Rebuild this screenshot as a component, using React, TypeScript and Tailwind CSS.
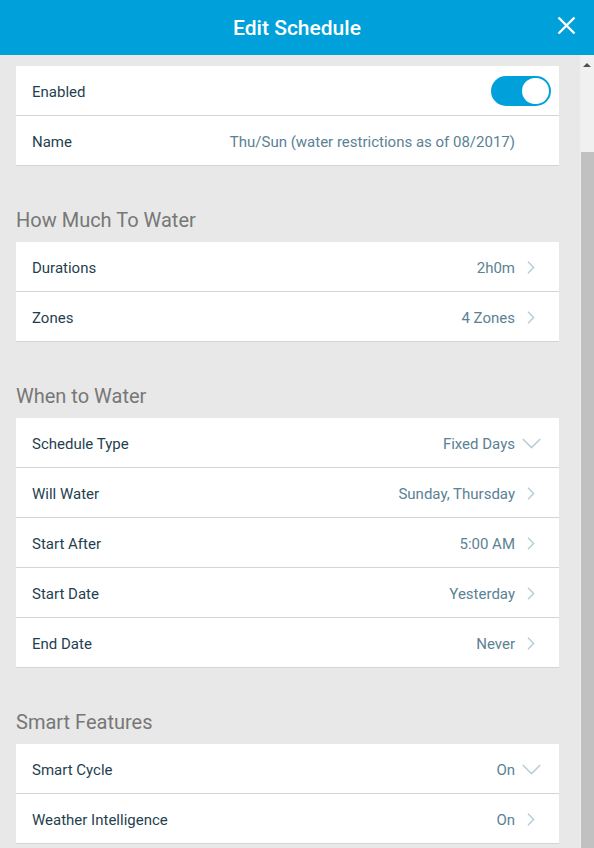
import type { ReactNode } from "react";

type Row = {
    label: string;
    value: string;
    icon?: "right" | "down";
};

const sections: { title: string; rows: Row[] }[] = [
    {
        title: "How Much To Water",
        rows: [
            { label: "Durations", value: "2h0m", icon: "right" },
            { label: "Zones", value: "4 Zones", icon: "right" },
        ],
    },
    {
        title: "When to Water",
        rows: [
            { label: "Schedule Type", value: "Fixed Days", icon: "down" },
            { label: "Will Water", value: "Sunday, Thursday", icon: "right" },
            { label: "Start After", value: "5:00 AM", icon: "right" },
            { label: "Start Date", value: "Yesterday", icon: "right" },
            { label: "End Date", value: "Never", icon: "right" },
        ],
    },
    {
        title: "Smart Features",
        rows: [
            { label: "Smart Cycle", value: "On", icon: "down" },
            { label: "Weather Intelligence", value: "On", icon: "right" },
        ],
    },
];

function ChevronRight() {
    return (
        <svg width="8" height="13" viewBox="0 0 8 13" fill="none">
            <path d="M1 0.8 L6.6 6.5 L1 12.2" stroke="#b9cdd6" strokeWidth="1.5" />
        </svg>
    );
}

function ChevronDown() {
    return (
        <svg width="19" height="11" viewBox="0 0 19 11" fill="none">
            <path d="M0.8 1 L9.5 9.6 L18.2 1" stroke="#b9cdd6" strokeWidth="1.5" />
        </svg>
    );
}

function ListRow({ label, children }: { label: string; children: ReactNode }) {
    return (
        <div className="flex h-[50px] items-center border-b border-[#d4d4d4] bg-white pl-4 pt-[3px]">
            <span className="text-[15px] text-[#1f3f50]">{label}</span>
            <div className="flex flex-1 items-center justify-end">{children}</div>
        </div>
    );
}

function ValueCell({ value, icon }: { value: string; icon?: "right" | "down" }) {
    return (
        <>
            <span className="text-[15px] text-[#5a8294]">{value}</span>
            <span className="ml-1 mr-4 -mt-[1px] flex w-6 items-center justify-center">
                {icon === "right" && <ChevronRight />}
                {icon === "down" && <ChevronDown />}
            </span>
        </>
    );
}

export default function App() {
    return (
        <div
            className="flex h-[848px] w-[594px] flex-col overflow-hidden bg-[#e8e8e8]"
            style={{ fontFamily: "Roboto, 'Liberation Sans', sans-serif" }}
        >
            <header className="relative flex h-[55px] shrink-0 items-center justify-center bg-[#00a1da] pt-[2px]">
                <h1 className="text-[21px] font-medium text-white">Edit Schedule</h1>
                <button className="absolute right-[18px] top-[16px] p-0">
                    <svg width="19" height="19" viewBox="0 0 19 19">
                        <path d="M1.5 1.5 L17.5 17.5 M17.5 1.5 L1.5 17.5" stroke="white" strokeWidth="2.4" />
                    </svg>
                </button>
            </header>

            <div className="flex min-h-0 flex-1">
                <main className="min-w-0 flex-1 pl-4 pr-[21px] pt-[11px]">
                    <div>
                        <ListRow label="Enabled">
                            <span className="mr-2 -mt-[3px] flex h-[30px] w-[60px] items-center justify-end rounded-full bg-[#00a1da] pr-[2px]">
                                <span className="h-[26px] w-[27px] rounded-full bg-white" />
                            </span>
                        </ListRow>
                        <ListRow label="Name">
                            <ValueCell value="Thu/Sun (water restrictions as of 08/2017)" />
                        </ListRow>
                    </div>

                    {sections.map((section) => (
                        <section key={section.title}>
                            <h2 className="pb-2 pt-10 text-[20px] leading-[28px] text-[#777777]">
                                {section.title}
                            </h2>
                            <div>
                                {section.rows.map((row) => (
                                    <ListRow key={row.label} label={row.label}>
                                        <ValueCell value={row.value} icon={row.icon} />
                                    </ListRow>
                                ))}
                            </div>
                        </section>
                    ))}
                </main>

                {/* fake scrollbar */}
                <div className="flex w-[14px] shrink-0 flex-col bg-[#f0f0f0]">
                    <div className="flex h-[18px] items-center justify-center pt-[2px]">
                        <span className="h-0 w-0 border-x-[4px] border-b-[4px] border-x-transparent border-b-[#505050]" />
                    </div>
                    <div className="h-[79px]" />
                    <div className="ml-[1px] flex-1 bg-[#c1c1c1]" />
                </div>
            </div>
        </div>
    );
}
